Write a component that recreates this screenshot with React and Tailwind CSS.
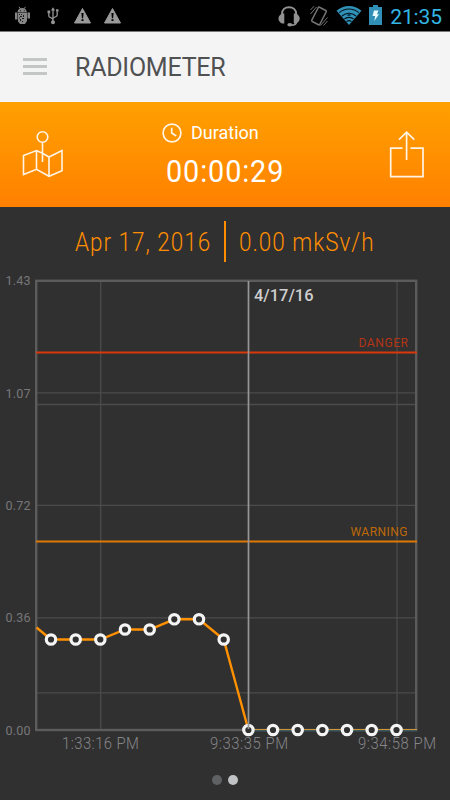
const points = [
  [51, 639.5], [75.7, 639.5], [100.3, 639.5], [125, 629.5], [149.7, 629.5],
  [174.3, 619.3], [199, 619.3], [223.7, 639.5], [248.4, 730], [273, 730],
  [297.7, 730], [322.4, 730], [347, 730], [371.7, 730], [396.5, 730],
];

const yLabels = [
  ['1.43', 285], ['1.07', 397.5], ['0.72', 510], ['0.36', 622], ['0.00', 734.5],
];

const xLabels = [
  ['1:33:16 PM', 62, 77], ['9:33:35 PM', 210, 78], ['9:34:58 PM', 358, 78],
];

/* Chart label with condensed glyphs, spaced to fill the given width. */
function Label({ x, y, width, children }) {
  return (
    <text
      transform={`translate(${x} ${y}) scale(0.93 1)`}
      textLength={width / 0.93}
      lengthAdjust="spacing"
    >
      {children}
    </text>
  );
}

function Warning() {
  return (
    <svg className="block" width="17" height="16" viewBox="0 0 17 16">
      <path d="M8.5 .5 16.5 15H.5Z" fill="#999" stroke="#999" strokeLinejoin="round" />
      <path d="M7.4 5h2.2l-.5 5.2H7.9ZM7.5 11.2h2v1.9h-2Z" fill="#000" />
    </svg>
  );
}

function StatusBar() {
  return (
    <div className="flex h-8 border-b border-[#777] bg-black">
      <div className="flex items-start pl-[14px]">
        <svg className="mt-1.5 block" width="17" height="20" viewBox="0 0 17 20">
          <g fill="#858585">
            <path d="M3.5 6C3.8 3.5 5.6 2 8.2 2s4.3 1.5 4.6 4ZM4 6.6h9V15l-2 3H6l-2-2.5ZM1 6.5h2.5v7H1ZM13.5 6.5H16v6h-2.5Z" />
            <path d="m5 .8 1.4 2M11.5 .8 10 2.8" stroke="#858585" />
          </g>
          <path d="M6 4.3h1v1H6ZM9.8 4.3h1v1h-1ZM5 8h1v1H5ZM7 8h1v1H7ZM9 9h1v2H9ZM6 10h2v1H6ZM8 12h2v1H8ZM6 13h1v2H6ZM8 15h1v1H8ZM5 11.5h1v1H5Z" fill="#1a1a1a" />
        </svg>
        <svg className="ml-4 mt-[7px] block" width="12" height="18" viewBox="0 0 12 18" fill="none" stroke="#949494" strokeWidth="1.3">
          <path d="M6 2v13M1.8 6v3c0 2 4.2 1.4 4.2 4M10.2 5v3c0 2.2-4.2 1.8-4.2 4" />
          <path d="m6 .2 2.1 3.3H3.9ZM.5 3.5h2.7v2.7H.5ZM9 2.2h2.5v2.6H9Z" fill="#949494" stroke="none" />
          <circle cx="6" cy="15.2" r="2" fill="#949494" stroke="none" />
        </svg>
        <div className="ml-[15px] mt-2 flex gap-[13px]">
          <Warning />
          <Warning />
        </div>
      </div>
      <div className="ml-auto flex items-start pr-2">
        <svg className="mt-[5px] block" width="23" height="23" viewBox="0 0 23 23">
          <path d="M4 10V9C4 4.8 7 2.2 11 2.2S18.2 4.8 18.2 9v1" fill="none" stroke="#929292" strokeWidth="2" />
          <path d="M6.3 8.5v10C3 18.8.5 16.5.5 13.5S3 8.4 6.3 8.5ZM15.8 8.5v10c3.3.3 5.9-2 5.9-5s-2.6-5.1-5.9-5Z" fill="#929292" />
          <path d="M18.3 17c0 2.8-2 3.2-5 3.2" fill="none" stroke="#929292" strokeWidth="1.8" />
          <ellipse cx="11.8" cy="19.7" rx="2.5" ry="1.8" fill="#929292" />
        </svg>
        <svg className="ml-2 mt-[5px] block" width="20" height="22" viewBox="0 0 20 22" fill="none" stroke="#747474" strokeWidth="1.5">
          <rect x="5.5" y="3" width="9" height="16" rx="1" transform="rotate(27 10 11)" />
          <path d="M1.5 5 5 1.2M1.5 9 7.5 2M14.5 20.5 18.5 16M11.5 20.5 18.5 12.5" strokeWidth="1" />
        </svg>
        <svg className="ml-[7px] mt-[5px] block" width="26" height="21" viewBox="0 0 26 21">
          <path d="M.5 5.8C7.6-.5 18.4-.5 25.5 5.8L13 20Z" fill="#3091b9" />
          <g fill="none" stroke="#06131a" strokeWidth="1.1">
            <path d="M3.2 7.6c5.6-4.9 14-4.9 19.6 0M6 11c4-3.5 10-3.5 14 0M8.4 14c2.6-2.2 6.6-2.2 9.2 0M10.5 16.6c1.5-1.2 3.5-1.2 5 0" />
          </g>
          <path d="m13 7 1.8 4h-3.6Z" fill="#06405a" />
        </svg>
        <svg className="ml-[7px] mt-[5px] block" width="13" height="20" viewBox="0 0 13 20">
          <path d="M4 0h5v2h4v18H0V2h4Z" fill="#3090b7" />
          <path d="M5 5.5h4.5L8 9.2h2L5.2 16l1-5H3.5Z" fill="#eafaff" />
        </svg>
        <div className="ml-2 mt-1 whitespace-nowrap text-[21px] leading-[26px] tracking-[-0.1px] text-[#33b5e5]">21:35</div>
      </div>
    </div>
  );
}

export default function App() {
  return (
    <div className="flex h-[800px] w-[450px] flex-col overflow-hidden bg-[#303030] font-['Roboto','Noto_Sans',sans-serif]">
      <StatusBar />
      <header className="flex h-[70px] items-start bg-[#f4f4f4]">
        <div className="ml-[23px] mt-[26px] flex w-6 flex-col gap-1">
          <div className="h-[3px] bg-[#c4c6c5]" />
          <div className="h-[3px] bg-[#c4c6c5]" />
          <div className="h-[3px] bg-[#c4c6c5]" />
        </div>
        <h1 className="ml-7 mt-[21px] whitespace-nowrap text-[25px] leading-[30px] tracking-[-0.25px] text-[#505153]">RADIOMETER</h1>
      </header>
      <section className="flex h-[105px] items-start bg-linear-to-b from-[#ffa000] to-[#ff8000] text-white">
        <svg className="ml-[21px] mt-[27px] block" width="43" height="52" viewBox="21 129 43 52" fill="none" stroke="#fff4e5" strokeWidth="1.6">
          <circle cx="42.5" cy="137" r="5.3" />
          <path d="M42.5 142.3V162M42.5 153.3 36.5 150.5 23.5 155.5V174.5L36.5 169.3 49 176.3 62 170.8V150.5L49 157 42.5 153.3M36.5 150.5V169.3M49 157V176.3" />
        </svg>
        <div className="ml-[98px] mt-[19px] flex flex-col items-start">
          <div className="flex items-center gap-[9px]">
            <svg className="block" width="20" height="20" viewBox="0 0 20 20" fill="none" stroke="#fff4e5" strokeWidth="1.7">
              <circle cx="10" cy="10" r="8.9" />
              <path d="M9.7 4.8V10l4.5 3" />
            </svg>
            <div className="whitespace-nowrap text-[18px] leading-6">Duration</div>
          </div>
          <div className="ml-1 mt-[7px] origin-left scale-x-90 whitespace-nowrap text-[32px] leading-[38px] tracking-[1px]">00:00:29</div>
        </div>
        <svg className="ml-auto mr-6 mt-7 block" width="38" height="50" viewBox="389 130 38 50" fill="none" stroke="#fff4e5" strokeWidth="1.7">
          <path d="M403.5 148.2H391.7V176.7H424V148.2H411.5M407.6 160V132M400 139.7 407.6 132.2 415.3 139.7" />
        </svg>
      </section>
      <section className="mt-[14px] flex h-[41px] items-start text-[25px] font-light leading-[44px] text-[#ff8d00]">
        <div className="w-[223px] pl-[75px]">
          <div className="origin-left scale-x-90 whitespace-nowrap tracking-[1.1px]">Apr 17, 2016</div>
        </div>
        <div className="ml-px h-[41px] w-0.5 bg-[#ff8d00]" />
        <div className="ml-[13px] origin-left scale-x-90 whitespace-nowrap tracking-[1.1px]">0.00 mkSv/h</div>
      </section>
      <svg className="block shrink-0" width="450" height="498" viewBox="0 262 450 498">
        <g stroke="#4b4b4b" strokeWidth="1.3">
          <path d="M36 392.8H416M36 404.5H416M36 505.3H416M36 617.8H416M36 692.8H416M100.7 281V730M397 281V730" />
        </g>
        <rect x="36.2" y="280.8" width="380" height="449.2" fill="none" stroke="#5c5c5c" strokeWidth="2.4" />
        <path d="M36 352.5H417" stroke="#d9380a" strokeWidth="2" />
        <path d="M36 541.5H417" stroke="#dd7804" strokeWidth="2" />
        <g fontSize="13.5" fill="#77777a">
          {yLabels.map(([label, y]) => (
            <Label key={label} x={5.5} y={y} width={25}>{label}</Label>
          ))}
        </g>
        <g fontSize="13" fill="#b43414"><Label x={358.5} y={347} width={49.5}>DANGER</Label></g>
        <g fontSize="13" fill="#bd6908"><Label x={350.5} y={536} width={57}>WARNING</Label></g>
        <path d="M36.5 627.5 51 639.5H100.3L125 629.5H149.7L174.3 619.3H199L223.7 639.5 248.4 730" fill="none" stroke="#ff9000" strokeWidth="2.4" />
        <path d="M248 730.8H417" stroke="#30515c" strokeWidth="1.5" />
        <path d="M248 729.6H417" stroke="#d99c35" strokeWidth="1" />
        <g fill="#303030" stroke="#f4f4f4" strokeWidth="3.2">
          {points.map(([x, y]) => (
            <circle key={x} cx={x} cy={y} r="4.7" />
          ))}
        </g>
        <path d="M248.5 281V729" stroke="#969696" strokeWidth="1.7" />
        <text x="254" y="301" fontSize="17" fontWeight="500" fill="#cfcfcf" textLength="59.5" lengthAdjust="spacingAndGlyphs">4/17/16</text>
        <g fontSize="16" fontWeight="300" fill="#858588">
          {xLabels.map(([label, x, w]) => (
            <Label key={label} x={x} y={749} width={w}>{label}</Label>
          ))}
        </g>
      </svg>
      <div className="mt-[15px] flex justify-center gap-1.5 pr-px">
        <div className="h-2.5 w-2.5 rounded-full bg-[#606163]" />
        <div className="h-2.5 w-2.5 rounded-full bg-[#c1c2c3]" />
      </div>
    </div>
  );
}
